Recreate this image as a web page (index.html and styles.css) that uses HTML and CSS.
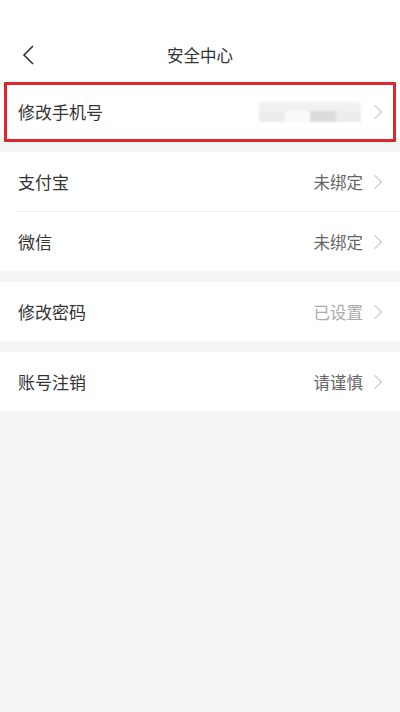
FILE: index.html
```html
<!DOCTYPE html>
<html lang="zh-CN">
<head>
    <meta charset="UTF-8">
    <meta name="viewport" content="width=device-width, initial-scale=1.0">
    <title>安全中心</title>
    <link rel="stylesheet" href="styles.css">
</head>
<body>
    <header class="nav">
        <span class="back">
            <svg width="12" height="20" viewBox="0 0 12 20"><path d="M11 1 L2 10 L11 19" fill="none" stroke="#333" stroke-width="1.6"/></svg>
        </span>
        <h1>安全中心</h1>
    </header>

    <!-- 手机号 -->
    <div class="group">
        <div class="row row-marked">
            <span class="label">修改手机号</span>
            <span class="value">
                <span class="blur">
                    <span class="blur-top"></span>
                    <span class="blur-bottom"><i></i><i class="light"></i><i class="dark"></i><i></i></span>
                </span>
                <span class="arrow"></span>
            </span>
        </div>
    </div>

    <!-- 第三方绑定 -->
    <div class="group">
        <div class="row">
            <span class="label">支付宝</span>
            <span class="value">未绑定<span class="arrow"></span></span>
        </div>
        <div class="row">
            <span class="label">微信</span>
            <span class="value">未绑定<span class="arrow"></span></span>
        </div>
    </div>

    <div class="group">
        <div class="row">
            <span class="label">修改密码</span>
            <span class="value done">已设置<span class="arrow"></span></span>
        </div>
    </div>

    <div class="group">
        <div class="row">
            <span class="label">账号注销</span>
            <span class="value">请谨慎<span class="arrow"></span></span>
        </div>
    </div>
</body>
</html>
```

FILE: styles.css
```css
body {
    margin: 0;
    min-height: 712px;
    background: #f5f5f5;
    font-family: "Noto Sans CJK SC", "Noto Sans", sans-serif;
    color: #333;
}
.nav {
    height: 82px;
    background: #fff;
    display: flex;
    align-items: flex-end;
    justify-content: center;
    position: relative;
    box-sizing: border-box;
    padding-bottom: 15px;
}
.nav h1 {
    margin: 0;
    font-size: 16.5px;
    font-weight: normal;
    line-height: 24px;
    color: #333;
}
.back {
    position: absolute;
    left: 22px;
    top: 45px;
    display: flex;
}
.group {
    background: #fff;
    margin-bottom: 11px;
}
.row {
    height: 59px;
    display: flex;
    align-items: center;
    justify-content: space-between;
    padding: 0 16px 0 18px;
    position: relative;
}
.row + .row {
    border-top: 1px solid #f0f0f0;
    margin-left: 16px;
    padding-left: 2px;
}
.row-marked::after {
    content: "";
    position: absolute;
    left: 4px;
    right: 4px;
    top: 0;
    bottom: -1px;
    border: 3px solid #e0252b;
    box-sizing: border-box;
}
.label {
    font-size: 17px;
}
.value {
    display: flex;
    align-items: center;
    font-size: 16.5px;
    color: #666;
}
.value.done {
    color: #aaa;
}
.arrow {
    width: 9px;
    height: 9px;
    border-top: 1.5px solid #c4c4c4;
    border-right: 1.5px solid #c4c4c4;
    transform: rotate(45deg);
    margin-left: 7px;
    margin-right: 4px;
}
.blur {
    width: 102px;
    height: 20px;
    margin-right: 2px;
    display: flex;
    flex-direction: column;
    filter: blur(1px);
}
.blur-top {
    height: 9px;
    background: #f1f1f1;
}
.blur-bottom {
    flex: 1;
    display: flex;
}
.blur-bottom i {
    flex: 1;
    background: #ececec;
}
.blur-bottom i.light {
    background: #f9f9f9;
}
.blur-bottom i.dark {
    background: #dcdcdc;
}
```
